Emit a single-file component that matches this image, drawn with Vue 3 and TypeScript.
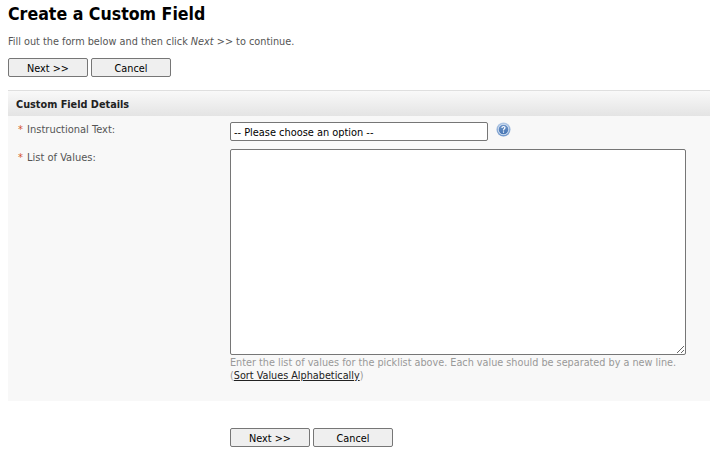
<script setup lang="ts">
const options: string[] = ['-- Please choose an option --']
</script>

<template>
  <div class="page">
    <h1 class="title">Create a Custom Field</h1>
    <p class="intro">Fill out the form below and then click <em>Next &gt;&gt;</em> to continue.</p>
    <div class="actions">
      <button type="button" class="btn">Next &gt;&gt;</button>
      <button type="button" class="btn">Cancel</button>
    </div>
    <section class="panel">
      <h2 class="panel-head">Custom Field Details</h2>
      <div class="panel-body">
        <div class="row first">
          <label class="label"><span class="req">*</span> Instructional Text:</label>
          <div class="control select-line">
            <select class="select">
              <option v-for="o in options" :key="o">{{ o }}</option>
            </select>
            <svg class="help" width="15" height="15" viewBox="0 0 15 15" aria-hidden="true">
              <defs>
                <linearGradient id="helpRing" x1="0" y1="0" x2="0" y2="1">
                  <stop offset="0" stop-color="#b4cae6" />
                  <stop offset="1" stop-color="#6f96ca" />
                </linearGradient>
                <linearGradient id="helpCore" x1="0" y1="0" x2="0" y2="1">
                  <stop offset="0" stop-color="#6f95c8" />
                  <stop offset="1" stop-color="#4474b3" />
                </linearGradient>
              </defs>
              <circle cx="7.5" cy="7.5" r="7" fill="url(#helpRing)" />
              <circle cx="7.5" cy="7.5" r="5.5" fill="#dce7f4" />
              <circle cx="7.5" cy="7.5" r="4.8" fill="url(#helpCore)" />
              <path d="M5.4 5.9c0-1.2 1-1.9 2.1-1.9s2.1.7 2.1 1.8c0 1.4-1.6 1.5-1.6 2.8H6.9c0-1.8 1.4-1.9 1.4-2.8 0-.4-.3-.7-.8-.7s-.9.3-.9.8z" fill="#fff" />
              <rect x="6.9" y="9.4" width="1.2" height="1.3" fill="#fff" />
            </svg>
          </div>
        </div>
        <div class="row">
          <label class="label second"><span class="req">*</span> List of Values:</label>
          <div class="control">
            <textarea class="textarea"></textarea>
            <div class="hint">Enter the list of values for the picklist above. Each value should be separated by a new line.</div>
            <div class="hint">(<a href="#" class="link">Sort Values Alphabetically</a>)</div>
          </div>
        </div>
      </div>
    </section>
    <div class="actions bottom">
      <button type="button" class="btn">Next &gt;&gt;</button>
      <button type="button" class="btn">Cancel</button>
    </div>
  </div>
</template>

<style>
html, body { margin: 0; background: #fff; }
</style>

<style scoped>
.page {
  width: 710px;
  height: 468px;
  box-sizing: border-box;
  padding-left: 8px;
  overflow: hidden;
  font-family: "DejaVu Sans", sans-serif;
  font-stretch: condensed;
  font-size: 10.8px;
  color: #555;
}
.title {
  margin: 0;
  padding-top: 3px;
  font-size: 17.6px;
  line-height: 23px;
  font-weight: 700;
  color: #000;
}
.intro {
  margin: 9px 0 0;
  line-height: 14px;
}
.actions {
  display: flex;
  gap: 3px;
  margin-top: 9px;
}
.btn {
  width: 80px;
  height: 19px;
  box-sizing: border-box;
  padding: 1px 0 0;
  border: 1px solid #767676;
  border-radius: 2px;
  background: #efefef;
  font: inherit;
  color: #000;
}
.panel {
  margin-top: 13px;
  background: #f8f8f8;
}
.panel-head {
  margin: 0;
  height: 26px;
  box-sizing: border-box;
  padding-left: 8px;
  border-top: 1px solid #dfdfdf;
  background: linear-gradient(#f9f9f9, #e4e4e4);
  font-size: 10.8px;
  line-height: 27px;
  font-weight: 700;
  color: #222;
}
.panel-body {
  padding: 6px 0 19px;
}
.row {
  display: flex;
  margin-top: 8px;
}
.row.first {
  margin-top: 0;
}
.label {
  width: 222px;
  box-sizing: border-box;
  padding: 1px 0 0 10px;
  font-size: 11px;
  line-height: 14px;
}
.label.second {
  padding-top: 2px;
}
.req {
  color: #d4532a;
  margin-right: 1px;
}
.select-line {
  display: flex;
  align-items: flex-start;
  gap: 8px;
}
.select {
  width: 258px;
  height: 19px;
  box-sizing: border-box;
  padding: 1px 0 0 3px;
  border: 1px solid #767676;
  border-radius: 2px;
  background: #fff;
  appearance: none;
  font: inherit;
  font-size: 10.9px;
  color: #000;
}
.help {
  display: block;
}
.textarea {
  display: block;
  width: 456px;
  height: 206px;
  box-sizing: border-box;
  margin: 0;
  padding: 2px;
  border: 1px solid #767676;
  border-radius: 2px;
  background: #fff;
}
.hint {
  font-size: 10.75px;
  line-height: 13px;
  color: #999;
}
.textarea + .hint {
  margin-top: 1px;
}
.link {
  color: #222;
  text-decoration: underline;
}
.bottom {
  margin-top: 27px;
  margin-left: 222px;
}
</style>
